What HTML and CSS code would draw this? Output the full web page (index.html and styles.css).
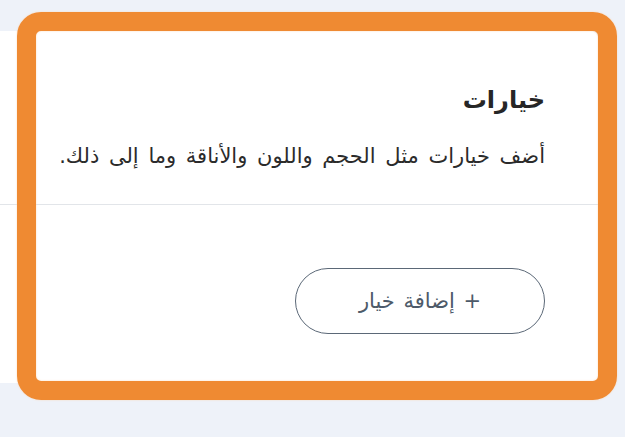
FILE: index.html
```html
<!DOCTYPE html>
<html lang="ar" dir="rtl">
<head>
    <meta charset="UTF-8">
    <title>خيارات</title>
    <meta name="viewport" content="width=device-width, initial-scale=1.0">
    <link rel="stylesheet" href="styles.css">
</head>
<body>

    <div class="page">
        <!-- Options card -->
        <section class="card">
            <header class="card-head">
                <h2 class="card-title">خيارات</h2>
                <p class="card-desc">أضف خيارات مثل الحجم واللون والأناقة وما إلى ذلك.</p>
            </header>
            <div class="card-body">
                <button type="button" class="btn-outline">+ إضافة خيار</button>
            </div>
        </section>

        <!-- Highlight frame drawn over the card -->
        <div class="highlight-frame"></div>
    </div>

</body>
</html>
```

FILE: styles.css
```css
body {
    margin: 0;
    padding: 0;
    background-color: #eef2f9;
    font-family: "DejaVu Sans", "Noto Sans Arabic", sans-serif;
    color: #222;
}
.page {
    position: relative;
    width: 625px;
    height: 437px;
    direction: ltr;
    padding-top: 31px;
    box-sizing: border-box;
}
.card {
    direction: rtl;
    width: 598px;
    height: 352px;
    background-color: #fff;
    border-radius: 0 8px 8px 0;
    display: flex;
    flex-direction: column;
}
.card-head {
    height: 174px;
    padding-right: 53px;
    border-bottom: 1px solid #e2e5e9;
    display: flex;
    flex-direction: column;
    padding-top: 54px;
    box-sizing: border-box;
}
.card-title {
    margin: 0;
    font-size: 24px;
    font-weight: 600;
    line-height: 30px;
    color: #262626;
}
.card-desc {
    margin: 27px 0 0;
    font-size: 21px;
    line-height: 28px;
    word-spacing: 3px;
    color: #2b2b2b;
}
.card-body {
    padding: 63px 53px 0 0;
}
.btn-outline {
    width: 250px;
    height: 66px;
    border: 1.5px solid #5b6877;
    border-radius: 33px;
    background: #fff;
    color: #4d5a69;
    font-family: inherit;
    font-size: 21px;
    word-spacing: 2px;
    cursor: pointer;
}
.highlight-frame {
    position: absolute;
    left: 17px;
    top: 12px;
    width: 600px;
    height: 388px;
    box-sizing: border-box;
    border: 19px solid #ef8a32;
    border-radius: 24px;
    box-shadow: 0 0 2px #fbd9b8, inset 0 0 2px #fbd9b8;
}
```
